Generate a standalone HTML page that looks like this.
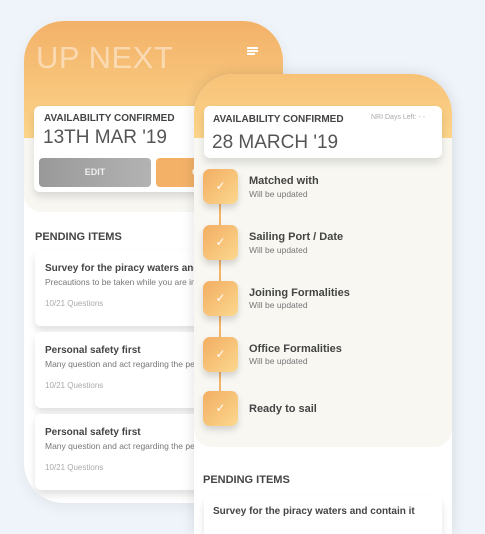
<!DOCTYPE html><html><head><style>
*{margin:0;padding:0;box-sizing:border-box}
body{width:485px;height:517px;overflow:hidden;background:#eef4f9;font-family:"Liberation Sans",sans-serif;position:relative;color:#444}
.abs{position:absolute}
.back{left:24px;top:21px;width:259px;height:482px;border-radius:40px;background:#fff;overflow:hidden;box-shadow:0 4px 14px rgba(0,0,0,.06)}
.bhead{left:0;top:0;width:259px;height:117px;background:linear-gradient(#f3b168,#fbd48a)}
.bbeige{left:0;top:117px;width:259px;height:74px;background:#f8f7f2;border-radius:0 0 0 18px}
.card{background:#fff;border-radius:6px;box-shadow:0 5px 8px rgba(0,0,0,.12)}
.t{position:absolute;white-space:nowrap}
.front{left:194px;top:74px;width:258px;height:460px;border-radius:40px 40px 0 0;background:#fff;overflow:hidden;box-shadow:0 0 14px rgba(0,0,0,.12)}
.fhead{left:0;top:0;width:258px;height:64px;background:linear-gradient(#f7c278,#fbd48a)}
.fbeige{left:0;top:64px;width:258px;height:309px;background:#f8f7f2;border-radius:0 0 18px 18px}
.box{position:absolute;left:9px;width:35px;height:35px;border-radius:7px;background:linear-gradient(135deg,#f2ad62,#fbd88e);box-shadow:0 4px 7px rgba(0,0,0,.15);color:#fff;font-size:12px;text-align:center;line-height:35px}
.h{font-size:11px;font-weight:bold;color:#444}
.s{font-size:8.5px;color:#777}
</style></head><body>
<div class="abs back">
 <div class="abs bhead"></div>
 <div class="abs bbeige"></div>
 <div class="t" style="left:12px;top:19px;font-size:31px;color:#fff;opacity:.45;letter-spacing:.5px">UP NEXT</div>
 <div class="abs" style="left:223px;top:26px;width:11px;height:1.5px;background:#fff"></div>
 <div class="abs" style="left:223px;top:29px;width:11px;height:1.5px;background:#fff"></div>
 <div class="abs" style="left:223px;top:32px;width:8px;height:1.5px;background:#fff"></div>
 <div class="abs card" style="left:10px;top:85px;width:240px;height:86px"></div>
 <div class="t" style="left:20px;top:92px;font-size:10px;font-weight:bold;color:#444">AVAILABILITY CONFIRMED</div>
 <div class="t" style="left:19px;top:106px;font-size:19px;color:#555">13TH MAR '19</div>
 <div class="abs" style="left:15px;top:137px;width:112px;height:29px;border-radius:4px;background:linear-gradient(90deg,#999,#b3b3b3);color:#eee;font-size:9px;font-weight:bold;text-align:center;line-height:29px">EDIT</div>
 <div class="abs" style="left:132px;top:137px;width:112px;height:29px;border-radius:4px;background:#f3b168;color:#fff;font-size:9px;font-weight:bold;line-height:29px;padding-left:36px">C</div>
 <div class="t" style="left:11px;top:210px;font-size:11px;font-weight:bold;color:#444">PENDING ITEMS</div>
 <div class="abs card" style="left:11px;top:229px;width:200px;height:76px"></div>
 <div class="t h" style="left:21px;top:242px;font-size:10px">Survey for the piracy waters and c</div>
 <div class="t s" style="left:21px;top:256px">Precautions to be taken while you are in p</div>
 <div class="t" style="left:21px;top:278px;font-size:8px;color:#aaa">10/21 Questions</div>
 <div class="abs card" style="left:11px;top:311px;width:200px;height:76px"></div>
 <div class="t h" style="left:21px;top:324px;font-size:10px">Personal safety first</div>
 <div class="t s" style="left:21px;top:338px">Many question and act regarding the per</div>
 <div class="t" style="left:21px;top:360px;font-size:8px;color:#aaa">10/21 Questions</div>
 <div class="abs card" style="left:11px;top:393px;width:200px;height:76px"></div>
 <div class="t h" style="left:21px;top:406px;font-size:10px">Personal safety first</div>
 <div class="t s" style="left:21px;top:420px">Many question and act regarding the per</div>
 <div class="t" style="left:21px;top:442px;font-size:8px;color:#aaa">10/21 Questions</div>
</div>
<div class="abs front">
 <div class="abs fhead"></div>
 <div class="abs fbeige"></div>
 <div class="abs card" style="left:10px;top:32px;width:238px;height:52px"></div>
 <div class="t" style="left:19px;top:40px;font-size:10px;font-weight:bold;color:#444">AVAILABILITY CONFIRMED</div>
 <div class="t" style="left:177px;top:40px;font-size:7px;color:#aaa">NRI Days Left: - -</div>
 <div class="t" style="left:18px;top:58px;font-size:19px;color:#555">28 MARCH '19</div>
 <div class="abs" style="left:25px;top:120px;width:2px;height:200px;background:#f2b46a"></div>
 <div class="box" style="top:95px">✓</div>
 <div class="t h" style="left:55px;top:101px">Matched with</div><div class="t s" style="left:55px;top:115px">Will be updated</div>
 <div class="box" style="top:151px">✓</div>
 <div class="t h" style="left:55px;top:157px">Sailing Port / Date</div><div class="t s" style="left:55px;top:171px">Will be updated</div>
 <div class="box" style="top:207px">✓</div>
 <div class="t h" style="left:55px;top:213px">Joining Formalities</div><div class="t s" style="left:55px;top:226px">Will be updated</div>
 <div class="box" style="top:263px">✓</div>
 <div class="t h" style="left:55px;top:269px">Office Formalities</div><div class="t s" style="left:55px;top:282px">Will be updated</div>
 <div class="box" style="top:317px">✓</div>
 <div class="t h" style="left:55px;top:329px">Ready to sail</div>
 <div class="t" style="left:9px;top:400px;font-size:11px;font-weight:bold;color:#444">PENDING ITEMS</div>
 <div class="abs card" style="left:10px;top:422px;width:238px;height:60px"></div>
 <div class="t h" style="left:19px;top:432px;font-size:10px">Survey for the piracy waters and contain it</div>
</div>
</body></html>
